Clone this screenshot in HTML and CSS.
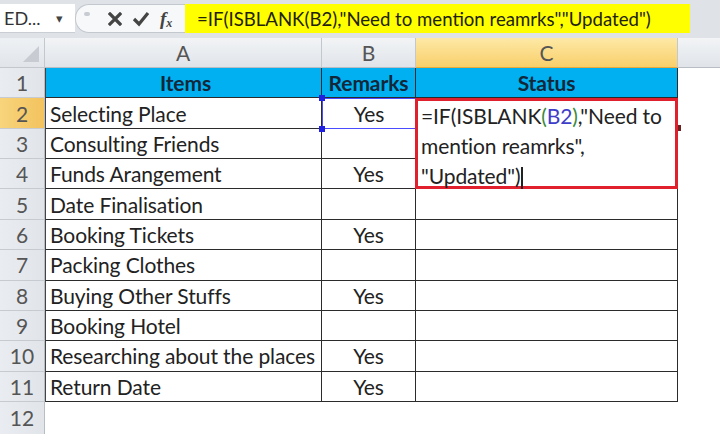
FILE: index.html
```html
<!DOCTYPE html>
<html>
<head>
<meta charset="utf-8">
<link rel="stylesheet" href="styles.css">
</head>
<body>
<div class="toolbar">
  <div class="namebox"><span class="nbtext">ED...</span><span class="arrow">&#9662;</span></div>
  <div class="icons">
    <span class="dot"></span>
    <svg class="ic-x" width="14" height="14" viewBox="0 0 14 14"><path d="M2 2 L12 12 M12 2 L2 12" stroke="#444" stroke-width="3.2" stroke-linecap="square"/></svg>
    <svg class="ic-ok" width="18" height="16" viewBox="0 0 18 16"><path d="M2 8 L7 13 L16 2" stroke="#444" stroke-width="3.2" fill="none"/></svg>
    <span class="fx">f<sub>x</sub></span>
  </div>
  <div class="formula">=IF(ISBLANK(B2),"Need to mention reamrks","Updated")</div>
</div>
<div class="sheet">
  <div class="corner"><span class="tri"></span></div>
  <div class="ch">A</div>
  <div class="ch">B</div>
  <div class="ch ch-sel">C</div>
  <div class="ch ch-end"></div>

  <div class="rh">1</div>
  <div class="c hd ca">Items</div>
  <div class="c hd cb">Remarks</div>
  <div class="c hd cc">Status</div>
  <div class="e"></div>

  <div class="rh rh-sel">2</div>
  <div class="c ca">Selecting Place</div>
  <div class="c cb b2">Yes<span class="h h1"></span><span class="h h2"></span></div>
  <div class="c cc edit"><span>=IF(ISBLANK<span class="g">(</span><span class="bl">B2</span><span class="g">)</span>,"Need to</span><span>mention reamrks",</span><span>"Updated")<span class="cur"></span></span><span class="mk"></span></div>
  <div class="e"></div>

  <div class="rh">3</div>
  <div class="c ca">Consulting Friends</div>
  <div class="c cb"></div>
  <div class="e"></div>

  <div class="rh">4</div>
  <div class="c ca">Funds Arangement</div>
  <div class="c cb">Yes</div>
  <div class="e"></div>

  <div class="rh">5</div>
  <div class="c ca">Date Finalisation</div>
  <div class="c cb"></div>
  <div class="c cc"></div>
  <div class="e"></div>

  <div class="rh">6</div>
  <div class="c ca">Booking Tickets</div>
  <div class="c cb">Yes</div>
  <div class="c cc"></div>
  <div class="e"></div>

  <div class="rh">7</div>
  <div class="c ca">Packing Clothes</div>
  <div class="c cb"></div>
  <div class="c cc"></div>
  <div class="e"></div>

  <div class="rh">8</div>
  <div class="c ca">Buying Other Stuffs</div>
  <div class="c cb">Yes</div>
  <div class="c cc"></div>
  <div class="e"></div>

  <div class="rh">9</div>
  <div class="c ca">Booking Hotel</div>
  <div class="c cb"></div>
  <div class="c cc"></div>
  <div class="e"></div>

  <div class="rh">10</div>
  <div class="c ca">Researching about the places</div>
  <div class="c cb">Yes</div>
  <div class="c cc"></div>
  <div class="e"></div>

  <div class="rh">11</div>
  <div class="c ca">Return Date</div>
  <div class="c cb">Yes</div>
  <div class="c cc"></div>
  <div class="e"></div>

  <div class="rh rh-last">12</div>
  <div class="e"></div>
  <div class="e"></div>
  <div class="e"></div>
  <div class="e"></div>
</div>
</body>
</html>
```
FILE: styles.css
```css
* { box-sizing: border-box; }
html, body { margin: 0; padding: 0; }
body {
  width: 720px;
  height: 434px;
  overflow: hidden;
  background: #fff;
  font-family: Lato, "Liberation Sans", sans-serif;
  color: #222;
}
.toolbar {
  height: 38px;
  background: #dfe3e8;
  padding-top: 4px;
  padding-bottom: 5px;
  display: flex;
}
.namebox {
  width: 75px;
  background: #fff;
  display: flex;
  align-items: center;
  padding-left: 4px;
  font-size: 18px;
  color: #333;
  border-bottom: 1px solid #c9ced4;
}
.nbtext { width: 52px; }
.arrow { font-size: 13px; color: #444; }
.icons {
  width: 110px;
  background: #f7f8fa;
  border: 1px solid #c3c8ce;
  border-right: none;
  border-radius: 14px 0 0 14px;
  display: flex;
  align-items: center;
  position: relative;
}
.dot {
  position: absolute;
  left: 8px;
  top: 7px;
  width: 6px;
  height: 4px;
  border-radius: 3px;
  background: #c8ccd2;
}
.ic-x { margin-left: 32px; }
.ic-ok { margin-left: 10px; }
.fx {
  margin-left: 10px;
  font-family: "Liberation Serif", serif;
  font-style: italic;
  font-weight: 700;
  font-size: 19px;
  color: #444;
  line-height: 1;
}
.fx sub { font-size: 12px; vertical-align: -2px; }
.formula {
  width: 505px;
  background: #ffff00;
  font-size: 18.6px;
  color: #22220a;
  display: flex;
  align-items: center;
  padding-left: 12px;
  white-space: nowrap;
}
.sheet {
  display: grid;
  grid-template-columns: 45px 277px 94px 262px 1fr;
  grid-template-rows: 30px repeat(11, 30.36px) 1fr;
  height: 396px;
}
.corner {
  background: linear-gradient(#eef1f4, #e1e5ea);
  border-right: 1px solid #c3c8ce;
  border-bottom: 1px solid #c3c8ce;
  position: relative;
}
.tri {
  position: absolute;
  right: 5px;
  bottom: 5px;
  width: 0;
  height: 0;
  border-left: 16px solid transparent;
  border-bottom: 16px solid #c8ccd2;
}
.ch {
  background: linear-gradient(#f2f4f6, #e0e4e9);
  border-right: 1px solid #c3c8ce;
  border-bottom: 1px solid #b8bdc3;
  display: flex;
  align-items: center;
  justify-content: center;
  font-size: 21px;
  color: #555;
}
.ch-sel {
  background: linear-gradient(#fde9a6, #f9cf6b);
  border-bottom: 1px solid #e6a93c;
}
.ch-end { border-right: none; }
.rh {
  background: linear-gradient(90deg, #e9ecf0, #e1e5ea);
  border-bottom: 1px solid #c6cbd1;
  border-right: 1px solid #b8bdc3;
  display: flex;
  align-items: center;
  justify-content: center;
  font-size: 21px;
  color: #555;
}
.rh-sel { background: linear-gradient(90deg, #f8d47c, #f3c35e); }
.rh-last { border-bottom: none; }
.c {
  border-right: 1.5px solid #2b2b2b;
  border-bottom: 1.5px solid #2b2b2b;
  display: flex;
  align-items: center;
  font-size: 21px;
  letter-spacing: -0.1px;
  color: #222;
  white-space: nowrap;
}
.ca { padding-left: 4px; border-left: 1px solid #444; }
.cb { justify-content: center; }
.hd {
  background: #00b0f0;
  font-weight: 700;
  justify-content: center;
  color: #12283a;
}
.b2 {
  position: relative;
  border: 1.5px solid #4b4bff;
}
.h {
  position: absolute;
  left: -4px;
  width: 6px;
  height: 6px;
  background: #2020e0;
}
.h1 { top: -4px; }
.h2 { bottom: -4px; }
.edit {
  grid-row: span 3;
  border: 3px solid #e0202c;
  flex-direction: column;
  align-items: flex-start;
  justify-content: flex-start;
  padding: 0 0 0 3px;
  line-height: 30px;
  position: relative;
  margin-left: -1px;
}
.g { color: #3c8a3c; }
.bl { color: #3e3ec8; }
.cur {
  display: inline-block;
  width: 1.5px;
  height: 22px;
  background: #222;
  vertical-align: -5px;
  margin-left: 1px;
}
.mk {
  position: absolute;
  right: -6px;
  top: 24px;
  width: 3px;
  height: 6px;
  background: #6a2020;
}
.e { background: #fff; }
```
